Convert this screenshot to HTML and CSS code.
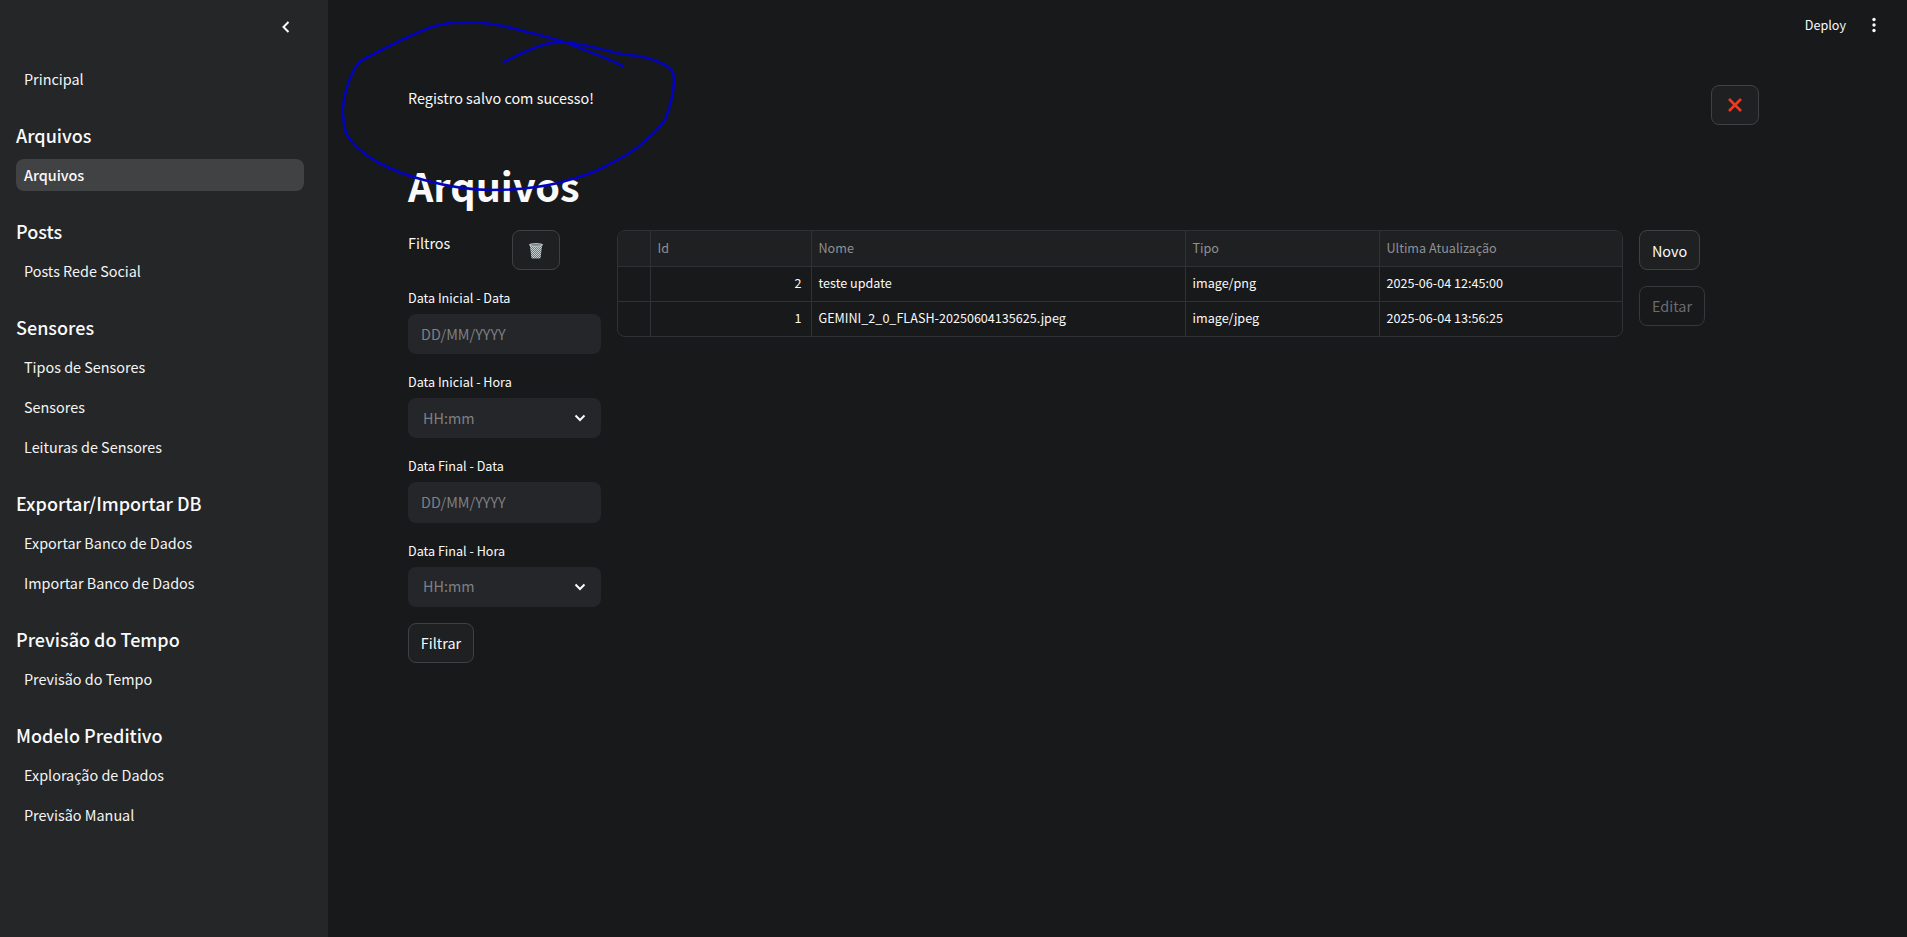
FILE: index.html
```html
<!DOCTYPE html>
<html lang="pt-BR">

<head>
    <meta charset="UTF-8">
    <meta name="viewport" content="width=device-width, initial-scale=1.0">
    <title>Arquivos</title>
    <link rel="stylesheet" href="styles.css">
</head>

<body>

    <!-- Menu lateral -->
    <aside class="sidebar">
        <div class="sidebar-top">
            <svg class="collapse-icon" viewBox="0 0 12 16" width="12" height="16">
                <path d="M8.5 3 L3.5 8 L8.5 13" fill="none" stroke="#fafafa" stroke-width="2" />
            </svg>
        </div>
        <nav class="nav-links">
            <a class="nav-link">Principal</a>
        </nav>
        <h3 class="nav-title">Arquivos</h3>
        <nav class="nav-links">
            <a class="nav-link active">Arquivos</a>
        </nav>
        <h3 class="nav-title">Posts</h3>
        <nav class="nav-links">
            <a class="nav-link">Posts Rede Social</a>
        </nav>
        <h3 class="nav-title">Sensores</h3>
        <nav class="nav-links">
            <a class="nav-link">Tipos de Sensores</a>
            <a class="nav-link">Sensores</a>
            <a class="nav-link">Leituras de Sensores</a>
        </nav>
        <h3 class="nav-title">Exportar/Importar DB</h3>
        <nav class="nav-links">
            <a class="nav-link">Exportar Banco de Dados</a>
            <a class="nav-link">Importar Banco de Dados</a>
        </nav>
        <h3 class="nav-title">Previsão do Tempo</h3>
        <nav class="nav-links">
            <a class="nav-link">Previsão do Tempo</a>
        </nav>
        <h3 class="nav-title">Modelo Preditivo</h3>
        <nav class="nav-links">
            <a class="nav-link">Exploração de Dados</a>
            <a class="nav-link">Previsão Manual</a>
        </nav>
    </aside>

    <main class="main">
        <header class="topbar">
            <span class="deploy">Deploy</span>
            <svg class="menu-icon" viewBox="0 0 6 18" width="6" height="18">
                <circle cx="3" cy="3.5" r="1.7" fill="#fafafa" />
                <circle cx="3" cy="9" r="1.7" fill="#fafafa" />
                <circle cx="3" cy="14.5" r="1.7" fill="#fafafa" />
            </svg>
        </header>

        <div class="notice">
            <p class="notice-text">Registro salvo com sucesso!</p>
            <button class="btn btn-close" type="button">
                <svg viewBox="0 0 16 16" width="16" height="16">
                    <path d="M2 2 L14 14 M14 2 L2 14" stroke="#f1391f" stroke-width="2.6" fill="none" />
                </svg>
            </button>
        </div>

        <h1 class="page-title">Arquivos</h1>

        <div class="content">
            <!-- Filtros -->
            <section class="filters">
                <div class="filters-head">
                    <span class="filters-title">Filtros</span>
                    <button class="btn btn-trash" type="button">
                        <svg viewBox="0 0 16 17" width="16" height="17">
                            <defs>
                                <pattern id="mesh" width="2" height="2" patternUnits="userSpaceOnUse">
                                    <rect width="2" height="2" fill="#6f7c7e" />
                                    <rect width="1" height="1" fill="#c4cdce" />
                                    <rect x="1" y="1" width="1" height="1" fill="#c4cdce" />
                                </pattern>
                            </defs>
                            <path d="M1.8 3 L3.4 15.4 Q3.5 16.4 4.5 16.4 L11.5 16.4 Q12.5 16.4 12.6 15.4 L14.2 3 Z" fill="url(#mesh)" />
                            <ellipse cx="8" cy="2.8" rx="7" ry="1.9" fill="#b4bec0" />
                            <ellipse cx="8" cy="2.8" rx="5" ry="0.9" fill="#76827f" />
                        </svg>
                    </button>
                </div>
                <label class="field">
                    <span class="field-label">Data Inicial - Data</span>
                    <input class="field-input" type="text" placeholder="DD/MM/YYYY">
                </label>
                <div class="field">
                    <span class="field-label">Data Inicial - Hora</span>
                    <div class="field-select">
                        <span>HH:mm</span>
                        <svg viewBox="0 0 12 8" width="12" height="8">
                            <path d="M1.5 1.5 L6 6 L10.5 1.5" fill="none" stroke="#fafafa" stroke-width="2" />
                        </svg>
                    </div>
                </div>
                <label class="field">
                    <span class="field-label">Data Final - Data</span>
                    <input class="field-input" type="text" placeholder="DD/MM/YYYY">
                </label>
                <div class="field field-last">
                    <span class="field-label">Data Final - Hora</span>
                    <div class="field-select">
                        <span>HH:mm</span>
                        <svg viewBox="0 0 12 8" width="12" height="8">
                            <path d="M1.5 1.5 L6 6 L10.5 1.5" fill="none" stroke="#fafafa" stroke-width="2" />
                        </svg>
                    </div>
                </div>
                <button class="btn btn-filter" type="button">Filtrar</button>
            </section>

            <!-- Tabela de arquivos -->
            <div class="table-wrap">
                <table class="data-table">
                    <thead>
                        <tr>
                            <th class="col-index"></th>
                            <th class="col-id">Id</th>
                            <th class="col-name">Nome</th>
                            <th class="col-type">Tipo</th>
                            <th>Ultima Atualização</th>
                        </tr>
                    </thead>
                    <tbody>
                        <tr>
                            <td></td>
                            <td class="num">2</td>
                            <td>teste update</td>
                            <td>image/png</td>
                            <td>2025-06-04 12:45:00</td>
                        </tr>
                        <tr>
                            <td></td>
                            <td class="num">1</td>
                            <td>GEMINI_2_0_FLASH-20250604135625.jpeg</td>
                            <td>image/jpeg</td>
                            <td>2025-06-04 13:56:25</td>
                        </tr>
                    </tbody>
                </table>
            </div>

            <div class="actions">
                <button class="btn btn-new" type="button">Novo</button>
                <button class="btn btn-edit" type="button" disabled>Editar</button>
            </div>
        </div>
    </main>

    <!-- Rabisco azul feito sobre a captura -->
    <svg class="scribble" viewBox="0 0 1907 937" width="1907" height="937">
        <path d="M623 66 C604 57 585 50 567 43 C553 38 540 35 527 32 C505 26 484 21 464 23 C450 22 440 24 429 28 C408 36 387 47 366 58 C358 62 356 66 353 72 C347 84 344 96 343 107 C342 116 344 125 346 133 C352 145 365 155 379 163 C393 170 408 176 424 180 C446 186 468 190 491 190 C515 190 537 188 558 183 C572 179 585 176 598 170 C612 163 626 156 638 147 C649 138 658 130 665 120 C670 107 674 94 674 80 C674 75 673 71 670 68 C662 63 653 59 643 57 C634 55 625 55 616 53 C601 49 586 45 571 43 C562 42 553 42 545 44 C530 49 517 55 504 62"
            fill="none" stroke="#0303bd" stroke-width="2.6" stroke-linecap="round" />
    </svg>

</body>

</html>
```

FILE: styles.css
```css
* {
    box-sizing: border-box;
}

/* As letras latinas da Noto CJK sao maiores, por isso os tamanhos reduzidos */
body {
    font-family: "Noto Sans CJK SC", "Noto Sans", sans-serif;
    margin: 0;
    min-height: 100vh;
    display: flex;
    background-color: #18191b;
    color: #fafafa;
    font-size: 14.4px;
    overflow: hidden;
}

/* Menu lateral */
.sidebar {
    width: 328px;
    flex-shrink: 0;
    min-height: 100vh;
    padding: 0 24px 0 16px;
    background-color: #242628;
}

.sidebar-top {
    height: 63px;
    display: flex;
    justify-content: flex-end;
    padding: 19px 12px 0 0;
}

.collapse-icon {
    display: block;
}

.nav-title {
    margin: 25px 0 9px;
    font-size: 18px;
    font-weight: 500;
    line-height: 30px;
}

.nav-links {
    display: flex;
    flex-direction: column;
    gap: 8px;
}

.nav-link {
    height: 32px;
    padding: 0 8px;
    border-radius: 8px;
    line-height: 32px;
    color: #f5f5f5;
}

.nav-link.active {
    background-color: #414244;
    font-weight: 500;
    color: #fafafa;
}

/* Area principal */
.main {
    flex: 1;
    padding-left: 80px;
}

.topbar {
    height: 50px;
    display: flex;
    justify-content: flex-end;
    align-items: center;
    gap: 25px;
    padding-right: 30px;
    margin-bottom: 35px;
    font-size: 12.6px;
}

.deploy {
    line-height: 20px;
}

.notice {
    width: 1351px;
    height: 40px;
    display: flex;
    justify-content: space-between;
}

.notice-text {
    margin: 0;
    line-height: 26px;
}

.page-title {
    margin: 34px 0 19px;
    font-size: 39.6px;
    font-weight: 700;
    line-height: 52px;
}

.content {
    display: flex;
    align-items: flex-start;
}

/* Botoes */
.btn {
    display: flex;
    align-items: center;
    justify-content: center;
    height: 40px;
    padding: 0;
    border: 1px solid #3f4144;
    border-radius: 8px;
    background-color: #1e2022;
    color: #fafafa;
    font-family: inherit;
    font-size: 14.4px;
}

.btn-close {
    width: 48px;
}

.btn-trash {
    width: 48px;
}

.btn-filter {
    width: 66px;
}

.btn-new {
    width: 61px;
}

.btn-edit {
    width: 66px;
    padding-bottom: 2px;
    background-color: transparent;
    border-color: #36383b;
    color: #6b6d70;
}

/* Filtros */
.filters {
    width: 193px;
    margin-right: 16px;
}

.filters-head {
    width: 152px;
    display: flex;
    justify-content: space-between;
    margin-bottom: 17.75px;
}

.filters-title {
    line-height: 26px;
}

.field {
    display: block;
    margin-bottom: 18px;
}

.field-last {
    margin-bottom: 16px;
}

.field-label {
    display: block;
    margin-bottom: 6px;
    font-size: 12.6px;
    line-height: 20px;
}

.field-input,
.field-select {
    width: 100%;
    height: 40.5px;
    border: none;
    border-radius: 8px;
    background-color: #242629;
    font-family: inherit;
    font-size: 14.4px;
}

.field-input {
    display: block;
    padding: 0 13px 2px;
    color: #fafafa;
}

.field-input::placeholder {
    color: #7e8083;
    opacity: 1;
}

.field-select {
    height: 40px;
    display: flex;
    justify-content: space-between;
    align-items: center;
    padding: 0 15px;
    color: #7e8083;
}

.field-select span {
    padding-bottom: 2px;
}

/* Tabela */
.table-wrap {
    width: 1006px;
    border: 1px solid #2f3134;
    border-radius: 8px;
    overflow: hidden;
    margin-right: 16px;
}

.data-table {
    width: 100%;
    border-collapse: collapse;
    table-layout: fixed;
    font-size: 12.6px;
}

.data-table th,
.data-table td {
    padding: 0 7px 2px;
    border-right: 1px solid #2f3134;
    border-bottom: 1px solid #2f3134;
    text-align: left;
    white-space: nowrap;
}

.data-table th:last-child,
.data-table td:last-child {
    border-right: none;
}

.data-table tbody tr:last-child td {
    border-bottom: none;
}

.data-table th {
    height: 35px;
    background-color: #1e2022;
    color: #8f9194;
    font-weight: 400;
}

.data-table td {
    height: 35px;
}

.data-table td.num {
    padding-right: 9px;
    text-align: right;
}

.col-index {
    width: 32px;
}

.col-id {
    width: 161px;
}

.col-name {
    width: 374px;
}

.col-type {
    width: 194px;
}

.actions {
    display: flex;
    flex-direction: column;
    gap: 16px;
}

/* Rabisco por cima da pagina */
.scribble {
    position: absolute;
    top: 0;
    left: 0;
    pointer-events: none;
}
```
